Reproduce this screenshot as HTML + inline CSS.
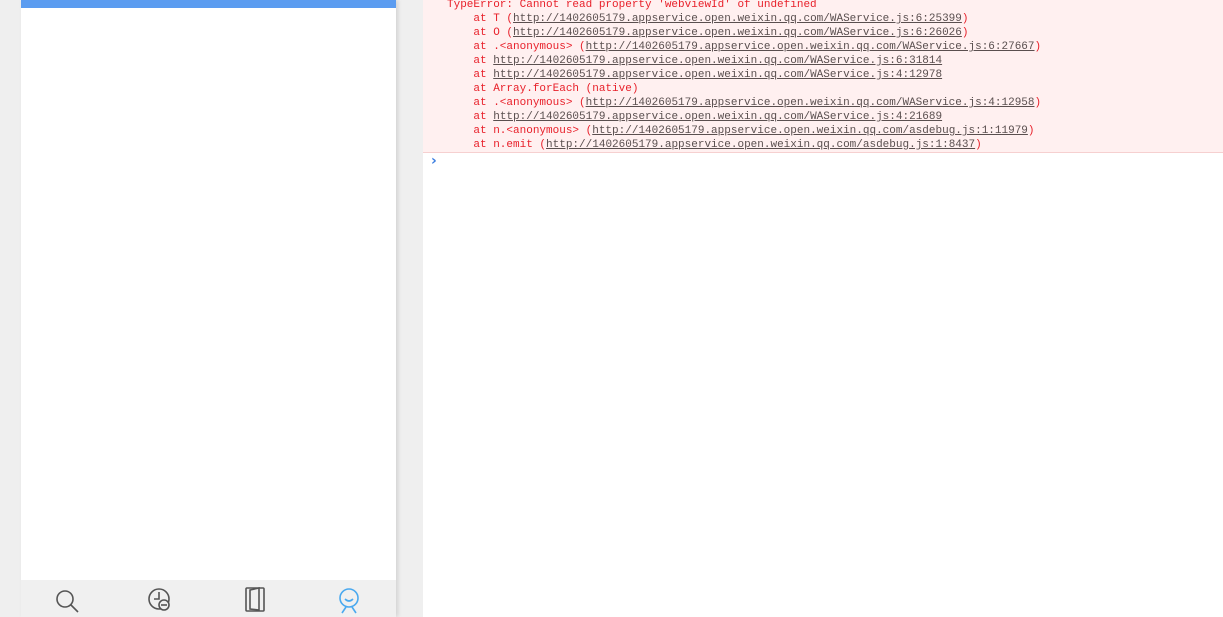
<!DOCTYPE html>
<html><head><style>
body{margin:0;width:1223px;height:617px;background:#efefef;position:relative;overflow:hidden;font-family:"Liberation Sans",sans-serif}
.phone{position:absolute;left:21px;top:0;width:375px;height:617px;background:#fff;box-shadow:2px 0 4px rgba(0,0,0,.12)}
.bar{position:absolute;left:0;top:0;width:375px;height:8px;background:#5b9cf0}
.tab{position:absolute;left:0;top:580px;width:375px;height:37px;background:#f0f0f0}
.con{position:absolute;left:423px;top:0;width:800px;height:617px;background:#fff}
.err{position:absolute;left:0;top:0;width:800px;height:152px;background:#fff0f0;border-bottom:1px solid #f6d0d0}
pre{margin:0;position:absolute;left:24px;top:-2px;font:11px/14px "Liberation Mono",monospace;color:#e8202a}
pre u{color:#5a4f4f}
.p{position:absolute;left:8px;top:153px;color:#3a7de0;font:bold 14px "DejaVu Sans",sans-serif}
</style></head><body>
<div class="phone"><div class="bar"></div>
<div class="tab">
<svg width="375" height="37" style="position:absolute;left:0;top:0" fill="none" stroke-width="1.6">
<g stroke="#555"><circle cx="44" cy="19" r="8"/><line x1="50" y1="25" x2="57" y2="32"/></g>
<g stroke="#555"><circle cx="138" cy="19" r="10"/><path d="M138 12v7h-5"/><circle cx="143" cy="25" r="5" fill="#f0f0f0"/><line x1="140" y1="25" x2="146" y2="25"/></g>
<g stroke="#555"><rect x="225" y="8" width="18" height="23" rx="1"/><path d="M229 10l9-2v22l-9-1z"/></g>
<g stroke="#4aa9ef"><circle cx="328" cy="18" r="9"/><path d="M324 19q4 4 8 0M321 33l4-6M335 33l-4-6"/></g>
</svg></div></div>
<div class="con"><div class="err"><pre>TypeError: Cannot read property 'webviewId' of undefined
    at T (<u>http://1402605179.appservice.open.weixin.qq.com/WAService.js:6:25399</u>)
    at O (<u>http://1402605179.appservice.open.weixin.qq.com/WAService.js:6:26026</u>)
    at .&lt;anonymous&gt; (<u>http://1402605179.appservice.open.weixin.qq.com/WAService.js:6:27667</u>)
    at <u>http://1402605179.appservice.open.weixin.qq.com/WAService.js:6:31814</u>
    at <u>http://1402605179.appservice.open.weixin.qq.com/WAService.js:4:12978</u>
    at Array.forEach (native)
    at .&lt;anonymous&gt; (<u>http://1402605179.appservice.open.weixin.qq.com/WAService.js:4:12958</u>)
    at <u>http://1402605179.appservice.open.weixin.qq.com/WAService.js:4:21689</u>
    at n.&lt;anonymous&gt; (<u>http://1402605179.appservice.open.weixin.qq.com/asdebug.js:1:11979</u>)
    at n.emit (<u>http://1402605179.appservice.open.weixin.qq.com/asdebug.js:1:8437</u>)</pre></div>
<div class="p">›</div></div>
</body></html>
